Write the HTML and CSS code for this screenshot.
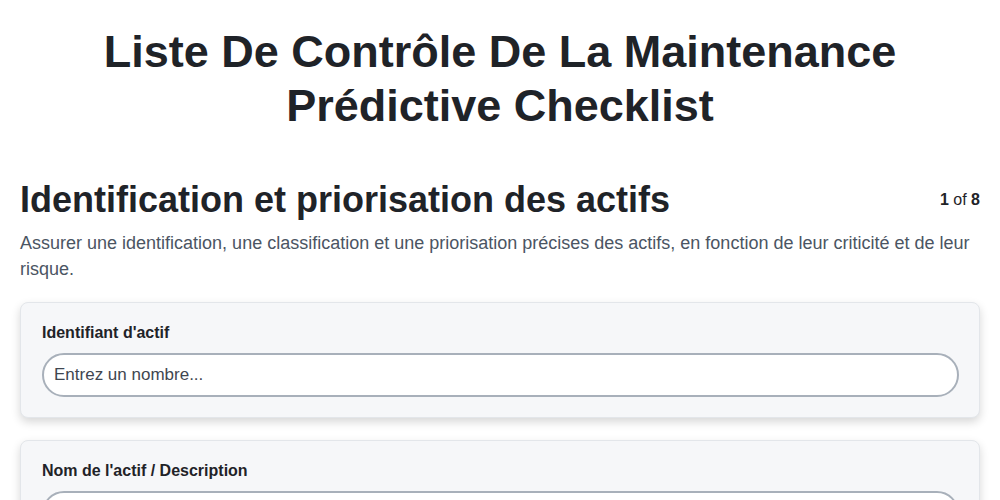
FILE: index.html
```html
<!DOCTYPE html>
<html lang="fr">
<head>
<meta charset="utf-8">
<title>Checklist</title>
<link rel="stylesheet" href="styles.css">
</head>
<body>
<main class="page">
  <h1 class="title">Liste De Contrôle De La Maintenance Prédictive Checklist</h1>
  <section class="section">
    <div class="section-head">
      <h2 class="section-title">Identification et priorisation des actifs</h2>
      <div class="counter"><b>1</b> of <b>8</b></div>
    </div>
    <p class="section-desc">Assurer une identification, une classification et une priorisation précises des actifs, en fonction de leur criticité et de leur risque.</p>
    <div class="card">
      <label class="field-label">Identifiant d'actif</label>
      <input class="field-input" type="text" placeholder="Entrez un nombre...">
    </div>
    <div class="card">
      <label class="field-label">Nom de l'actif / Description</label>
      <input class="field-input" type="text" placeholder="Entrez du texte...">
    </div>
  </section>
</main>
</body>
</html>
```

FILE: styles.css
```css
* { box-sizing: border-box; }
html, body { margin: 0; padding: 0; background: #ffffff; }
body {
  font-family: "Liberation Sans", Arial, sans-serif;
  color: #1f2328;
}
.page {
  padding: 25px 20px 20px 20px;
}
.title {
  margin: 0 auto 45px;
  max-width: 860px;
  text-align: center;
  font-size: 45px;
  line-height: 54px;
  font-weight: 700;
  color: #1f2328;
}
.section-head {
  display: flex;
  align-items: center;
  justify-content: space-between;
}
.section-title {
  margin: 0;
  font-size: 36px;
  line-height: 44px;
  font-weight: 700;
  color: #1f2328;
}
.counter {
  font-size: 16px;
  color: #1f2328;
}
.section-desc {
  margin: 8px 0 20px;
  font-size: 18px;
  line-height: 26px;
  color: #4b5563;
}
.card {
  background: #f6f7f9;
  border: 1px solid #e3e6ea;
  border-radius: 8px;
  padding: 20px 20px 20px 21px;
  margin-bottom: 22px;
  box-shadow: 0 4px 10px rgba(0, 0, 0, 0.16);
  display: flex;
  flex-direction: column;
}
.field-label {
  font-size: 16px;
  line-height: 20px;
  font-weight: 700;
  color: #1f2328;
  margin-bottom: 10px;
}
.field-input {
  height: 44px;
  border: 2px solid #a8b0ba;
  border-radius: 22px;
  background: #ffffff;
  padding: 0 10px;
  font-family: "Liberation Sans", Arial, sans-serif;
  font-size: 17px;
  color: #1f2328;
  outline: none;
}
.field-input::placeholder {
  color: #3f4650;
  opacity: 1;
}
```
